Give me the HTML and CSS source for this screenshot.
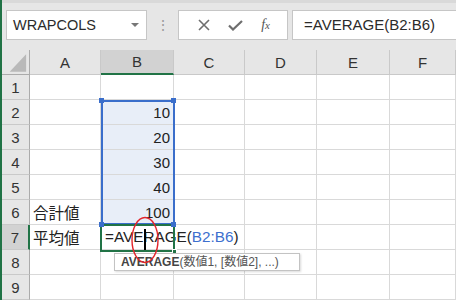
FILE: index.html
```html
<!DOCTYPE html>
<html lang="ja">
  <head>
    <meta charset="UTF-8" />
    <title>WRAPCOLS</title>
    <link rel="stylesheet" href="styles.css">
  </head>
  <body>
    <div class="app">
      <div class="toolbar">
        <div class="namebox">
          <span>WRAPCOLS</span>
          <span class="drop"></span>
        </div>
        <div class="grip">⋮</div>
        <div class="buttons">
          <svg width="12" height="12" viewBox="0 0 12 12"><path d="M1 1 L11 11 M11 1 L1 11" stroke="#6e6e6e" stroke-width="1.6" fill="none"/></svg>
          <svg width="15" height="11" viewBox="0 0 15 11"><path d="M1 5.5 L5 9.5 L14 1" stroke="#6e6e6e" stroke-width="2.2" fill="none"/></svg>
          <span class="fx">f<small>x</small></span>
        </div>
        <div class="formula">=AVERAGE(B2:B6)</div>
      </div>

      <div class="sheet">
        <div class="corner">
          <svg width="28" height="25" viewBox="0 0 28 25"><polygon points="25,4 25,22 8,22" fill="#b9b9b9"/></svg>
        </div>
        <div class="colhead">A</div>
        <div class="colhead active">B</div>
        <div class="colhead">C</div>
        <div class="colhead">D</div>
        <div class="colhead">E</div>
        <div class="colhead">F</div>

        <div class="rowhead">1</div>
        <div class="cell"></div><div class="cell"></div><div class="cell"></div><div class="cell"></div><div class="cell"></div><div class="cell"></div>

        <div class="rowhead">2</div>
        <div class="cell"></div><div class="cell num sel">10</div><div class="cell"></div><div class="cell"></div><div class="cell"></div><div class="cell"></div>

        <div class="rowhead">3</div>
        <div class="cell"></div><div class="cell num sel">20</div><div class="cell"></div><div class="cell"></div><div class="cell"></div><div class="cell"></div>

        <div class="rowhead">4</div>
        <div class="cell"></div><div class="cell num sel">30</div><div class="cell"></div><div class="cell"></div><div class="cell"></div><div class="cell"></div>

        <div class="rowhead">5</div>
        <div class="cell"></div><div class="cell num sel">40</div><div class="cell"></div><div class="cell"></div><div class="cell"></div><div class="cell"></div>

        <div class="rowhead">6</div>
        <div class="cell label">合計値</div><div class="cell num sel">100</div><div class="cell"></div><div class="cell"></div><div class="cell"></div><div class="cell"></div>

        <div class="rowhead active">7</div>
        <div class="cell label">平均値</div>
        <div class="cell edit">=AVERAGE(<span class="ref">B2:B6</span>)</div>
        <div class="cell spill"></div><div class="cell"></div><div class="cell"></div><div class="cell"></div>

        <div class="rowhead">8</div>
        <div class="cell"></div><div class="cell"></div><div class="cell"></div><div class="cell"></div><div class="cell"></div><div class="cell"></div>

        <div class="rowhead">9</div>
        <div class="cell"></div><div class="cell"></div><div class="cell"></div><div class="cell"></div><div class="cell"></div><div class="cell"></div>

        <!-- overlays -->
        <div class="range"></div>
        <span class="handle h-tl"></span>
        <span class="handle h-tr"></span>
        <span class="handle h-bl"></span>
        <span class="handle h-br"></span>
        <div class="activecell"><span class="fill"></span></div>
        <div class="tip"><b>AVERAGE</b>(数値1, [数値2], ...)</div>
        <svg class="mark" width="30" height="48" viewBox="0 0 30 48">
          <ellipse cx="15" cy="24" rx="13" ry="22.5" stroke="#e3262c" stroke-width="1.4" fill="none"/>
          <rect x="14" y="13" width="2" height="21" fill="#000"/>
        </svg>
      </div>
    </div>
  </body>
</html>
```

FILE: styles.css
```css
* {
  box-sizing: border-box;
  margin: 0;
  padding: 0;
}

body {
  width: 456px;
  height: 300px;
  overflow: hidden;
  background: #fff;
  font-family: 'Liberation Sans', 'Noto Sans CJK JP', sans-serif;
  color: #222;
}

.app {
  border-left: 2px solid #217346;
  height: 300px;
  overflow: hidden;
}

/* formula bar */

.toolbar {
  height: 50px;
  background: #e6e6e6;
  border-top: 3px solid #d9d9d9;
  padding-top: 7px;
  display: flex;
  align-items: flex-start;
}

.namebox {
  margin-left: 4px;
  width: 141px;
  height: 30px;
  background: #fff;
  border: 1px solid #c6c6c6;
  display: flex;
  align-items: center;
  justify-content: space-between;
  padding: 0 7px 0 6px;
  font-size: 14.5px;
  color: #2b2b2b;
}

.drop {
  width: 0;
  height: 0;
  border-left: 4px solid transparent;
  border-right: 4px solid transparent;
  border-top: 4px solid #777;
}

.grip {
  width: 31px;
  text-align: center;
  color: #9a9a9a;
  font-size: 14px;
  line-height: 30px;
}

.buttons {
  width: 110px;
  height: 30px;
  background: #fff;
  border: 1px solid #c6c6c6;
  display: flex;
  align-items: center;
  justify-content: space-around;
  padding: 0 8px 0 10px;
}

.fx {
  font-family: 'Liberation Serif', serif;
  font-style: italic;
  font-size: 14px;
  color: #555;
}

.fx small {
  font-size: 11px;
}

.formula {
  margin-left: 4px;
  flex: 1;
  height: 30px;
  background: #fff;
  border: 1px solid #c6c6c6;
  border-right: none;
  padding-left: 11px;
  font-size: 15px;
  line-height: 28px;
  color: #2b2b2b;
}

/* grid */

.sheet {
  position: relative;
  display: grid;
  grid-template-columns: 28px 71px 73px 71px 72px 73px 66px;
  grid-auto-rows: 25px;
}

.corner,
.colhead,
.rowhead {
  background: #e6e6e6;
  border-right: 1px solid #c9c9c9;
  border-bottom: 1px solid #c9c9c9;
  display: flex;
  align-items: center;
  justify-content: center;
  font-size: 15px;
  color: #333;
}

.corner {
  border-right-color: #ababab;
  border-bottom-color: #ababab;
}

.colhead.active {
  background: #d2d2d2;
  border-bottom: 2px solid #217346;
}

.rowhead {
  border-right-color: #ababab;
}

.rowhead.active {
  background: #d2d2d2;
  border-right: 2px solid #217346;
}

.cell {
  border-right: 1px solid #d9d9d9;
  border-bottom: 1px solid #d9d9d9;
  display: flex;
  align-items: center;
  font-size: 15px;
  padding: 0 3px;
  white-space: nowrap;
}

.cell.num {
  justify-content: flex-end;
}

.cell.sel {
  background: #e8eef8;
}

.cell.label {
  font-size: 15.5px;
  padding-left: 3px;
}

.cell.edit {
  overflow: visible;
  position: relative;
  z-index: 2;
  border-right: none;
  padding-left: 4px;
  font-size: 15.3px;
  color: #222;
}

.ref {
  color: #3d6fce;
}

/* overlays */

.range {
  position: absolute;
  left: 99px;
  top: 50px;
  width: 74px;
  height: 125px;
  border: 2px solid #3a6ecb;
}

.handle {
  position: absolute;
  width: 5px;
  height: 5px;
  background: #3a6ecb;
}

.h-tl { left: 97px; top: 48px; }
.h-tr { left: 169px; top: 48px; }
.h-bl { left: 97px; top: 172px; z-index: 4; }
.h-br { left: 169px; top: 172px; z-index: 4; }

.activecell {
  position: absolute;
  left: 98px;
  top: 174px;
  width: 75px;
  height: 28px;
  border: 2px solid #217346;
  z-index: 3;
}

.fill {
  position: absolute;
  right: -4px;
  bottom: -4px;
  width: 5px;
  height: 5px;
  background: #217346;
  border: 1px solid #fff;
}

.tip {
  position: absolute;
  left: 112px;
  top: 203px;
  width: 186px;
  height: 18px;
  background: #fff;
  border: 1px solid #c3c3c3;
  box-shadow: 1px 1px 2px rgba(0, 0, 0, 0.15);
  font-size: 12px;
  line-height: 16px;
  padding-left: 6px;
  color: #555;
  white-space: nowrap;
  z-index: 5;
}

.tip b {
  color: #444;
}

.mark {
  position: absolute;
  left: 128px;
  top: 166px;
  z-index: 6;
}
```
